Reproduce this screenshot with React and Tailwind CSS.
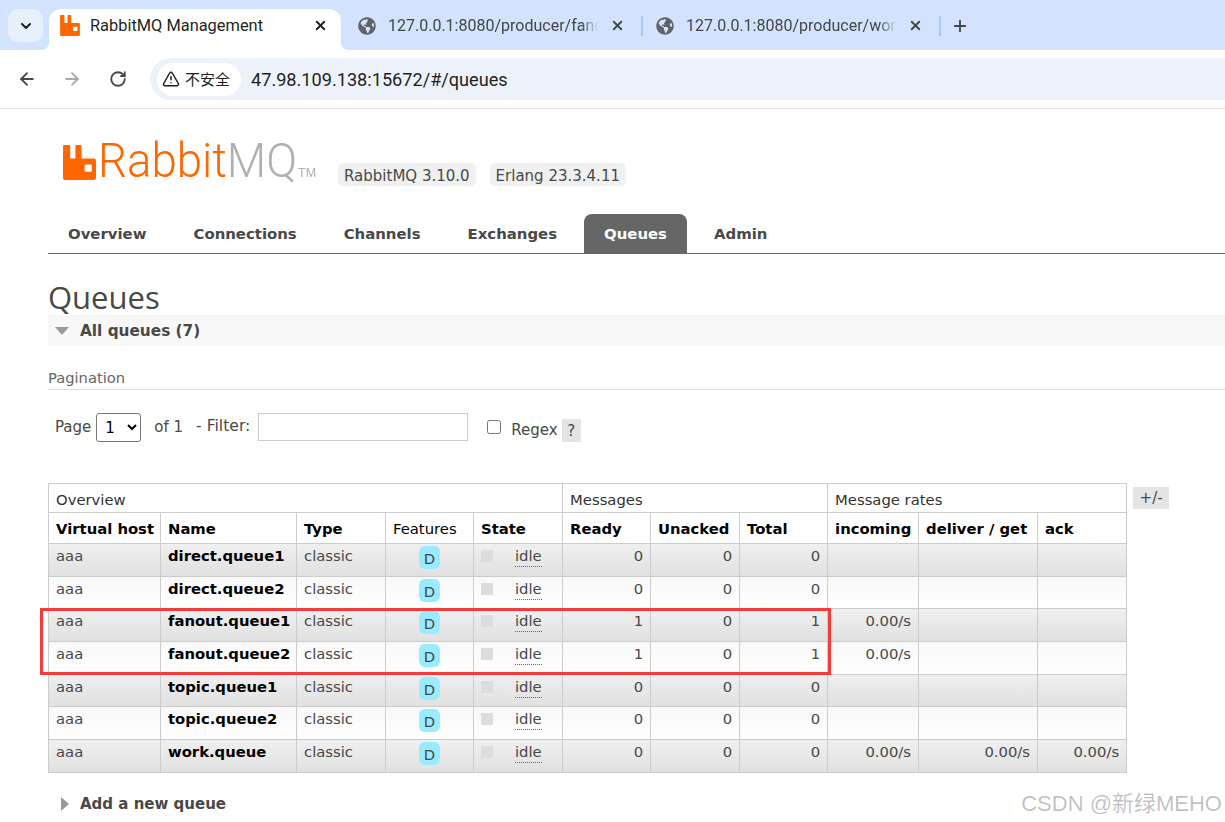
import { ArrowLeft, ArrowRight, ChevronDown, Plus, RotateCw, TriangleAlert, X } from "lucide-react";
import { FaGlobeAmericas } from "react-icons/fa";

const navItems = ["Overview", "Connections", "Channels", "Exchanges", "Queues", "Admin"];

const queues = [
    { name: "direct.queue1", ready: 0, total: 0, incoming: "" },
    { name: "direct.queue2", ready: 0, total: 0, incoming: "" },
    { name: "fanout.queue1", ready: 1, total: 1, incoming: "0.00/s" },
    { name: "fanout.queue2", ready: 1, total: 1, incoming: "0.00/s" },
    { name: "topic.queue1", ready: 0, total: 0, incoming: "" },
    { name: "topic.queue2", ready: 0, total: 0, incoming: "" },
    { name: "work.queue", ready: 0, total: 0, incoming: "0.00/s", deliver: "0.00/s", ack: "0.00/s" },
];

function RabbitLogo({ className }) {
    return (
        <svg viewBox="0 0 32 34" className={className}>
            <path
                fillRule="evenodd"
                fill="#ff6600"
                d="M1 0H6a1 1 0 0 1 1 1V13H12V1a1 1 0 0 1 1-1H17a1 1 0 0 1 1 1V13H30a2 2 0 0 1 2 2V32a2 2 0 0 1-2 2H2a2 2 0 0 1-2-2V1a1 1 0 0 1 1-1ZM22 19a1 1 0 0 0-1 1V25a1 1 0 0 0 1 1H27a1 1 0 0 0 1-1V20a1 1 0 0 0-1-1Z"
            />
        </svg>
    );
}

function Tab({ title }) {
    return (
        <div className="w-[298px] h-[41px] flex items-center pl-[13px] text-[#444746]">
            <FaGlobeAmericas className="w-[18px] h-[18px] text-[#5f6368] shrink-0" />
            <div className="ml-[12px] w-[210px] whitespace-nowrap text-[16px] [mask-image:linear-gradient(to_right,black_92%,transparent)]">{title}</div>
            <X size={15} strokeWidth={3} className="ml-[12px] shrink-0 text-[#444746]" />
            <div className="ml-[16px] w-[2px] h-[20px] bg-[#a8c7fa] shrink-0"></div>
        </div>
    );
}

function BrowserChrome() {
    return (
        <div className="font-['Roboto',sans-serif]">
            <div className="h-[50px] bg-[#d3e3fd] flex items-end pl-[8px]">
                <div className="w-[35px] h-[33px] mb-[8px] bg-[#e9f0fd] rounded-[10px] flex items-center justify-center">
                    <ChevronDown size={16} strokeWidth={3} className="text-[#1f1f1f]" />
                </div>
                <div className="relative ml-[6px] w-[292px] h-[41px] bg-white rounded-t-[12px] flex items-center pl-[11px] pb-[8px]">
                    <div className="absolute -left-[8px] bottom-0 w-[8px] h-[8px] bg-[radial-gradient(circle_at_0_0,transparent_8px,white_8px)]"></div>
                    <div className="absolute -right-[8px] bottom-0 w-[8px] h-[8px] bg-[radial-gradient(circle_at_100%_0,transparent_8px,white_8px)]"></div>
                    <RabbitLogo className="w-[20px] h-[21px] shrink-0" />
                    <div className="ml-[10px] mt-[1px] text-[16.4px] text-[#1f1f1f] w-[223px]">RabbitMQ Management</div>
                    <X size={15} strokeWidth={3} className="text-[#1f1f1f] shrink-0" />
                </div>
                <div className="flex -translate-y-[4px] items-center pl-[4px]">
                    <Tab title="127.0.0.1:8080/producer/fano" />
                    <Tab title="127.0.0.1:8080/producer/wor" />
                    <Plus size={18} strokeWidth={2.5} className="ml-[10px] text-[#444746]" />
                </div>
            </div>
            <div className="h-[59px] bg-white border-b border-[#e4e4e4] flex items-center rounded-tl-[10px]">
                <ArrowLeft size={20} strokeWidth={2.2} className="ml-[17px] text-[#474747]" />
                <ArrowRight size={20} strokeWidth={2.2} className="ml-[25px] text-[#a9a9a9]" />
                <RotateCw size={18} strokeWidth={2.4} className="ml-[27px] text-[#474747]" />
                <div className="ml-[23px] flex-1 h-[42px] bg-[#edf2fa] rounded-l-full flex items-center pl-[7px]">
                    <div className="h-[33px] w-[84px] bg-white rounded-full flex items-center pl-[5px] gap-[5px]">
                        <TriangleAlert size={18} strokeWidth={2} className="text-[#1f1f1f]" />
                        <span className="mt-[1px] text-[15px] text-[#1f1f1f] font-['Noto_Sans_CJK_SC',sans-serif]">不安全</span>
                    </div>
                    <div className="ml-[10px] mt-[1px] text-[18.15px] text-[#1f1f1f]">47.98.109.138:15672/#/queues</div>
                </div>
            </div>
        </div>
    );
}

function QueueRow({ queue, index }) {
    const bg = index % 2 === 0 ? "bg-linear-to-b from-[#f0f0f0] to-[#e0e0e0]" : "bg-linear-to-b from-[#f8f8f8] to-white";
    const cell = "border border-[#cccccc] px-[7px] pt-[1px] align-top";
    return (
        <tr className={`h-[32.7px] ${bg} text-[#484848]`}>
            <td className={cell}>aaa</td>
            <td className={`${cell} font-bold text-black`}>{queue.name}</td>
            <td className={cell}>classic</td>
            <td className={`${cell} text-center`}>
                <span className="inline-block mt-[1px] w-[21px] h-[23px] leading-[26px] rounded-[6px] bg-[#99ebff] text-[#484848]">D</span>
            </td>
            <td className={cell}>
                <div className="flex items-start">
                    <span className="w-[12px] h-[12px] mt-[5px] bg-[#dddddd]"></span>
                    <span className="ml-[22px] leading-[21px] border-b border-dotted border-[#666666]">idle</span>
                </div>
            </td>
            <td className={`${cell} text-right`}>{queue.ready}</td>
            <td className={`${cell} text-right`}>0</td>
            <td className={`${cell} text-right`}>{queue.total}</td>
            <td className={`${cell} text-right`}>{queue.incoming}</td>
            <td className={`${cell} text-right`}>{queue.deliver}</td>
            <td className={`${cell} text-right`}>{queue.ack}</td>
        </tr>
    );
}

function QueueTable() {
    const group = "border border-[#cccccc] px-[7px] pt-[4px] text-left font-normal";
    const head = "border border-[#cccccc] px-[7px] pt-[2px] text-left font-bold whitespace-nowrap";
    return (
        <table className="table-fixed border-collapse w-[1078px] text-[14.8px] leading-[22px] text-black">
            <colgroup>
                <col className="w-[112px]" />
                <col className="w-[136px]" />
                <col className="w-[89px]" />
                <col className="w-[88px]" />
                <col className="w-[89px]" />
                <col className="w-[88px]" />
                <col className="w-[89px]" />
                <col className="w-[88px]" />
                <col className="w-[91px]" />
                <col className="w-[119px]" />
                <col className="w-[89px]" />
            </colgroup>
            <thead>
                <tr className="h-[29px]">
                    <th colSpan={5} className={`${group} text-[#333333]`}>Overview</th>
                    <th colSpan={3} className={`${group} text-[#333333]`}>Messages</th>
                    <th colSpan={3} className={`${group} text-[#333333]`}>Message rates</th>
                </tr>
                <tr className="h-[31px]">
                    <th className={head}>Virtual host</th>
                    <th className={head}>Name</th>
                    <th className={head}>Type</th>
                    <th className={`${head} font-normal`}>Features</th>
                    <th className={head}>State</th>
                    <th className={head}>Ready</th>
                    <th className={head}>Unacked</th>
                    <th className={head}>Total</th>
                    <th className={head}>incoming</th>
                    <th className={head}>deliver / get</th>
                    <th className={head}>ack</th>
                </tr>
            </thead>
            <tbody>
                {queues.map((queue, i) => (
                    <QueueRow key={queue.name} queue={queue} index={i} />
                ))}
            </tbody>
        </table>
    );
}

export default function App() {
    return (
        <div className="relative h-[822px] w-[1225px] overflow-hidden bg-white">
            <BrowserChrome />

            <div className="pl-[48px] font-['DejaVu_Sans',sans-serif] text-[15px] text-[#484848]">
                <div className="h-[105px] pl-[15px] pt-[36px] flex items-start">
                    <RabbitLogo className="w-[33px] h-[35px] shrink-0" />
                    <div className="ml-[2px] w-[221px] -mt-[12px]">
                        <div className="flex items-baseline whitespace-nowrap origin-left scale-x-[0.93] font-['Roboto',sans-serif] font-light text-[49px] leading-[56px]">
                            <span className="text-[#ff6600]">Rabbit</span>
                            <span className="text-[#b0b0b0]">MQ</span>
                            <span className="ml-[1px] text-[13.5px] leading-[12px] text-[#b0b0b0] font-['Liberation_Sans',sans-serif]">TM</span>
                        </div>
                    </div>
                    <div className="ml-[19px] mt-[18px] flex gap-[14px]">
                        <span className="px-[6px] h-[23px] leading-[27px] rounded-[5px] bg-[#f0f0f0]">RabbitMQ 3.10.0</span>
                        <span className="px-[6px] h-[23px] leading-[27px] rounded-[5px] bg-[#f0f0f0]">Erlang 23.3.4.11</span>
                    </div>
                </div>

                <div className="h-[40px] flex gap-[7px] border-b border-[#666666] font-bold text-[14.9px]">
                    {navItems.map((item) => (
                        <div
                            key={item}
                            className={`px-[20px] pt-[9px] rounded-t-[8px] ${item === "Queues" ? "bg-[#666666] text-white" : ""}`}
                        >
                            {item}
                        </div>
                    ))}
                </div>

                <h1 className="mt-[25px] text-[31px] leading-[36px] font-['Open_Sans',sans-serif] text-[#484848]">Queues</h1>

                <div className="h-[31px] bg-[#f8f8f8] flex items-center pl-[7px] font-bold">
                    <span className="w-0 h-0 border-x-[7px] border-x-transparent border-t-[8px] border-t-[#999999]"></span>
                    <span className="ml-[11px] mt-[2px] text-[15.3px]">All queues (7)</span>
                </div>

                <div className="mt-[22px] h-[22px] border-b border-[#dddddd] text-[14.7px] leading-[20px] text-[#666666]">Pagination</div>

                <div className="mt-[23px] ml-[7px] flex items-start h-[30px]">
                    <span className="mt-[3px]">Page</span>
                    <select defaultValue="1" className="ml-[5px] w-[45px] h-[29px] pl-[4px] border border-[#767676] rounded-[3px] bg-white text-black">
                        <option value="1">1</option>
                    </select>
                    <span className="ml-[13px] mt-[3px]">of 1</span>
                    <span className="ml-[13px] mt-[2px] text-[15.6px]">- Filter:</span>
                    <input type="text" className="ml-[8px] w-[210px] h-[28px] border border-[#cccccc]" />
                    <input type="checkbox" className="ml-[19px] mt-[7px] w-[14px] h-[14px]" />
                    <span className="ml-[10px] mt-[6px]">Regex</span>
                    <span className="ml-[4px] mt-[6px] w-[19px] h-[23px] bg-[#e4e4e4] text-center leading-[24px]">?</span>
                </div>

                <div className="mt-[40px] flex items-start gap-[6px]">
                    <QueueTable />
                    <div className="mt-[4px] w-[36px] h-[22px] bg-[#e4e4e4] text-center leading-[22px]">+/-</div>
                </div>

                <div className="mt-[20px] ml-[13px] flex items-center font-bold">
                    <span className="w-0 h-0 border-y-[7px] border-y-transparent border-l-[8px] border-l-[#999999]"></span>
                    <span className="ml-[11px]">Add a new queue</span>
                </div>
            </div>

            <div className="absolute left-[40px] top-[608px] w-[791px] h-[67px] border-[3px] border-[#f53b3b]"></div>
            <div className="absolute right-[3px] top-[787px] text-[22px] text-black/25 font-['Liberation_Sans','Noto_Sans_CJK_SC',sans-serif]">CSDN @新绿MEHO</div>
        </div>
    );
}
